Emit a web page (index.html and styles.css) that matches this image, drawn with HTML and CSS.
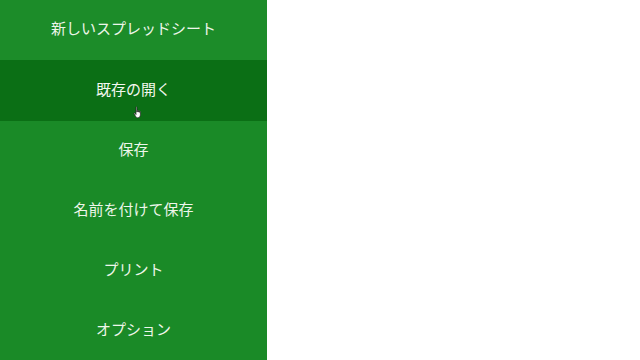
FILE: index.html
```html
<!doctype html>
<html>
<head>
  <meta charset="utf-8">
  <link rel="stylesheet" href="styles.css">
</head>
<body>
  <div id="menu">
    <div class="item first">新しいスプレッドシート</div>
    <div class="item active">既存の開く
      <svg class="cursor" width="10" height="13" viewBox="0 0 10 13">
        <path d="M3 1.2c0-.6.9-.6.9 0V6h.3V4.6c0-.6.9-.6.9 0V6h.3V5c0-.6.9-.6.9 0V6.3h.2v-.6c0-.6.9-.6.9 0v3.1c0 1.8-1 3-2.6 3H4.6C3.6 11.8 3 11 2.4 10L1 7.7c-.3-.6.4-1 .8-.5L3 8.6z" fill="#fff" stroke="#222" stroke-width=".7"/>
      </svg>
    </div>
    <div class="item">保存</div>
    <div class="item">名前を付けて保存</div>
    <div class="item">プリント</div>
    <div class="item">オプション</div>
  </div>
</body>
</html>
```
FILE: styles.css
```css
body {
  margin: 0;
  background-color: white;
  font-family: "Noto Sans CJK JP", "Noto Sans", sans-serif;
}
#menu {
  width: 267px;
  height: 360px;
  background-color: #1a8a27;
  overflow: hidden;
}
.item {
  position: relative;
  box-sizing: border-box;
  height: 60px;
  padding-bottom: 6px;
  display: flex;
  align-items: center;
  justify-content: center;
  color: #eef6ea;
  font-size: 15px;
}
.item.first {
  background-color: #1c8c29;
}
.item.active {
  height: 61px;
  padding-bottom: 4px;
  background-color: #0b6f15;
  color: #f4f8f0;
}
.cursor {
  position: absolute;
  left: 133px;
  top: 46px;
}
```
